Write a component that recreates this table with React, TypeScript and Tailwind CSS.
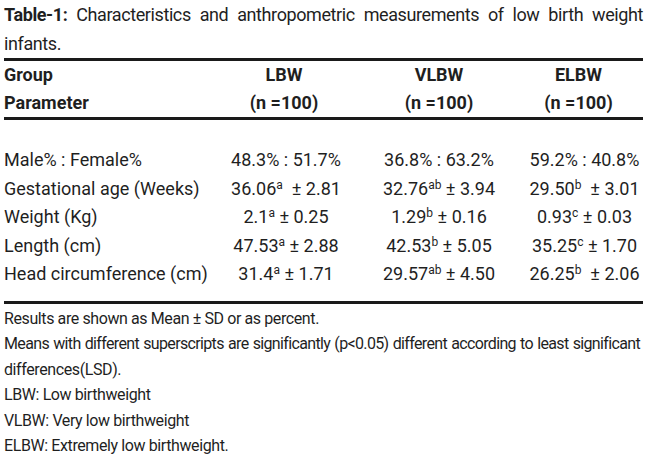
import React from "react";

const FONT = { fontFamily: 'Roboto, "Liberation Sans", sans-serif' };

type Cell = { v: string; s?: string; rest: string };

const rows: { label: string; cells: Cell[] }[] = [
  {
    label: "Male% : Female%",
    cells: [
      { v: "48.3% : 51.7%", rest: "" },
      { v: "36.8% : 63.2%", rest: "" },
      { v: "59.2% : 40.8%", rest: "" },
    ],
  },
  {
    label: "Gestational age (Weeks)",
    cells: [
      { v: "36.06", s: "a", rest: "\u00a0 \u00b1 2.81" },
      { v: "32.76", s: "ab", rest: " \u00b1 3.94" },
      { v: "29.50", s: "b", rest: "\u00a0 \u00b1 3.01" },
    ],
  },
  {
    label: "Weight (Kg)",
    cells: [
      { v: "2.1", s: "a", rest: " \u00b1 0.25" },
      { v: "1.29", s: "b", rest: " \u00b1 0.16" },
      { v: "0.93", s: "c", rest: " \u00b1 0.03" },
    ],
  },
  {
    label: "Length (cm)",
    cells: [
      { v: "47.53", s: "a", rest: " \u00b1 2.88" },
      { v: "42.53", s: "b", rest: " \u00b1 5.05" },
      { v: "35.25", s: "c", rest: " \u00b1 1.70" },
    ],
  },
  {
    label: "Head circumference (cm)",
    cells: [
      { v: "31.4", s: "a", rest: " \u00b1 1.71" },
      { v: "29.57", s: "ab", rest: " \u00b1 4.50" },
      { v: "26.25", s: "b", rest: "\u00a0 \u00b1 2.06" },
    ],
  },
];

function Val({ c }: { c: Cell }) {
  return (
    <span className="whitespace-pre">
      {c.v}
      {c.s ? <sup className="text-[12px]">{c.s}</sup> : null}
      {c.rest}
    </span>
  );
}

export default function App() {
  return (
    <div className="w-[650px] h-[468px] bg-white overflow-hidden text-[#1f1f1f]" style={FONT}>
      <div className="pl-[4px] pr-[7px]">
        {/* Title */}
        <div className="text-[18px] leading-[29px]">
          <div className="text-justify [text-align-last:justify] whitespace-nowrap tracking-[-0.4px]">
            <span className="font-bold">Table-1:</span> Characteristics and anthropometric measurements of low birth weight
          </div>
          <div className="tracking-[-0.4px]">infants.</div>
        </div>

        <div className="border-t-[3px] border-[#1a1a1a]" />

        {/* Header */}
        <div className="grid grid-cols-[200px_160px_150px_1fr] text-[18px] leading-[28px] font-bold">
          <div>Group</div>
          <div className="text-center">LBW</div>
          <div className="text-center">VLBW</div>
          <div className="text-center">ELBW</div>
          <div>Parameter</div>
          <div className="text-center">(n =100)</div>
          <div className="text-center">(n =100)</div>
          <div className="text-center">(n =100)</div>
        </div>

        <div className="border-t-[3px] border-[#1a1a1a]" />

        {/* Body */}
        <div className="grid grid-cols-[200px_160px_150px_1fr] text-[18px] leading-[28.5px] pt-[26px] pb-[12px]">
          {rows.map((r) => (
            <React.Fragment key={r.label}>
              <div className="whitespace-nowrap">{r.label}</div>
              <div className="text-center pl-[4px]">
                <Val c={r.cells[0]} />
              </div>
              <div className="text-center">
                <Val c={r.cells[1]} />
              </div>
              <div className="text-center pl-[12px]">
                <Val c={r.cells[2]} />
              </div>
            </React.Fragment>
          ))}
        </div>

        <div className="border-t-[3px] border-[#1a1a1a]" />

        {/* Footer */}
        <div className="text-[16px] leading-[25.6px] pt-[2px] pr-[3px] tracking-[-0.4px]">
          <div>Results are shown as Mean ± SD or as percent.</div>
          <div className="text-justify [text-align-last:justify] whitespace-nowrap tracking-[-0.65px]">
            Means with different superscripts are significantly (p&lt;0.05) different according to least significant
          </div>
          <div>differences(LSD).</div>
          <div>LBW: Low birthweight</div>
          <div>VLBW: Very low birthweight</div>
          <div>ELBW: Extremely low birthweight.</div>
        </div>
      </div>
    </div>
  );
}
